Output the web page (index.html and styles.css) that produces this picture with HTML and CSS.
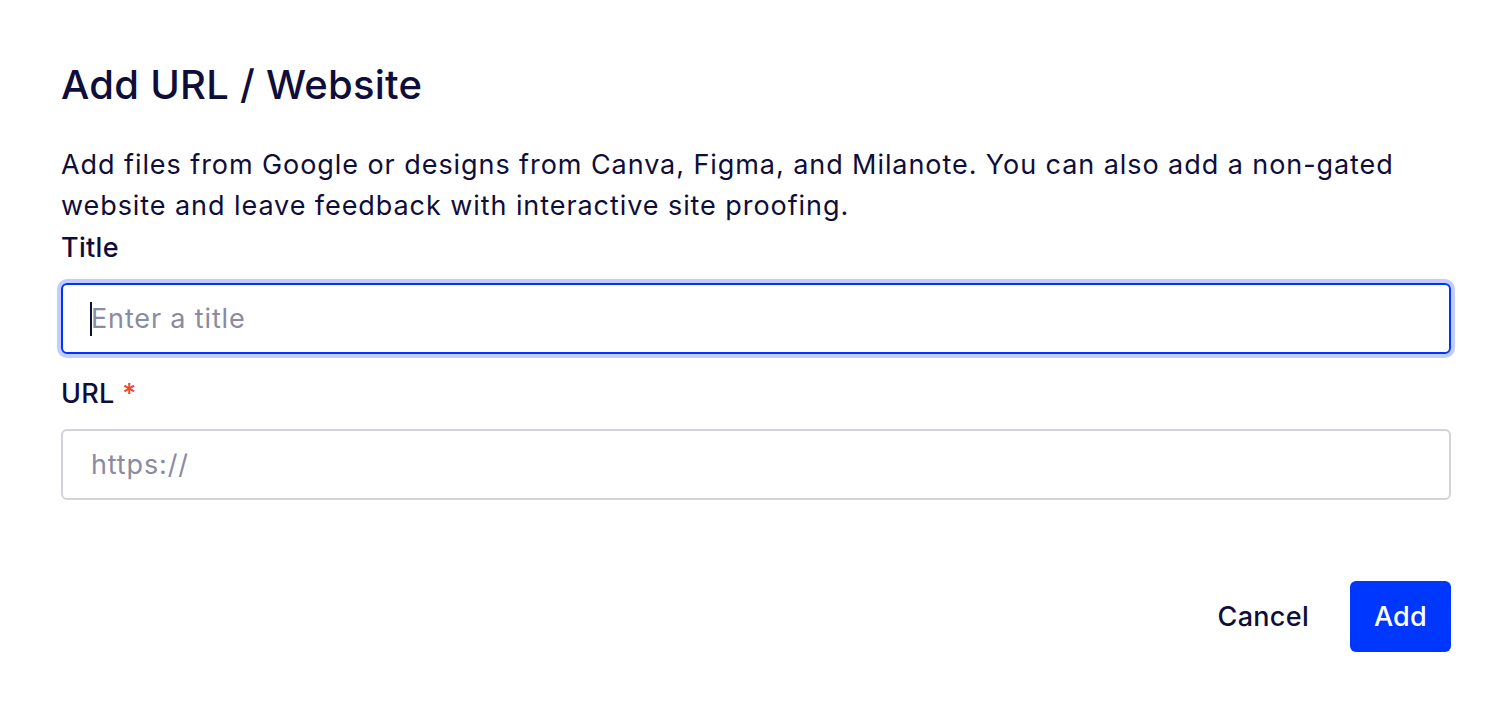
FILE: index.html
```html
<!DOCTYPE html>
<html lang="en">
<head>
  <meta charset="UTF-8" />
  <meta name="viewport" content="width=device-width, initial-scale=1.0"/>
  <title>Add URL / Website</title>
  <link rel="stylesheet" href="styles.css">
</head>
<body>
  <div class="dialog">
    <h1>Add URL / Website</h1>

    <p class="intro">Add files from Google or designs from Canva, Figma, and Milanote. You can also add a non-gated website and leave feedback with interactive site proofing.</p>

    <label for="titleInput">Title</label>
    <div class="field focused">
      <span class="caret"></span>
      <input id="titleInput" type="text" placeholder="Enter a title" />
    </div>

    <label for="urlInput">URL <span class="req">*</span></label>
    <div class="field">
      <input id="urlInput" type="text" placeholder="https://" />
    </div>

    <div class="actions">
      <button class="btn-cancel">Cancel</button>
      <button class="btn-add">Add</button>
    </div>
  </div>
</body>
</html>
```

FILE: styles.css
```css
body {
  margin: 0;
  background: #ffffff;
  font-family: Inter, 'Noto Sans', sans-serif;
  color: #0f0e3a;
}
.dialog {
  padding: 60px 61px 40px;
}
h1 {
  margin: 0;
  font-size: 40px;
  font-weight: 500;
  line-height: 50px;
  letter-spacing: 0.25px;
}
.intro {
  margin: 34px 0 0;
  font-size: 27px;
  line-height: 41px;
  letter-spacing: 0.93px;
}
label {
  display: block;
  margin-top: 1px;
  font-size: 27px;
  font-weight: 500;
  line-height: 41px;
  letter-spacing: 0.3px;
}
.req {
  color: #f04438;
}
.field {
  position: relative;
  margin-top: 15px;
  margin-bottom: 19px;
  height: 71px;
  border: 2px solid #d3d3de;
  border-radius: 6px;
  box-sizing: border-box;
  display: flex;
  align-items: center;
}
.field.focused {
  border-color: #0033ff;
  box-shadow: 0 0 0 4px #c3cdfd;
}
.field input {
  border: none;
  outline: none;
  background: transparent;
  width: 100%;
  padding: 0 0 0 28px;
  font-family: inherit;
  font-size: 27px;
  letter-spacing: 0.85px;
  color: #0f0e3a;
}
.field input::placeholder {
  color: #8a8aa2;
}
.caret {
  position: absolute;
  left: 27px;
  top: 17px;
  width: 2px;
  height: 34px;
  background: #0f0e3a;
}
.actions {
  display: flex;
  justify-content: flex-end;
  align-items: center;
  gap: 41px;
  margin-top: 81px;
}
.actions button {
  font-family: inherit;
  font-size: 27px;
  font-weight: 500;
  letter-spacing: 0.3px;
  border: none;
  cursor: pointer;
}
.btn-cancel {
  background: none;
  color: #0f0e3a;
  padding: 0;
}
.btn-add {
  background: #0037ff;
  color: #ffffff;
  width: 101px;
  height: 71px;
  border-radius: 6px;
}
```
